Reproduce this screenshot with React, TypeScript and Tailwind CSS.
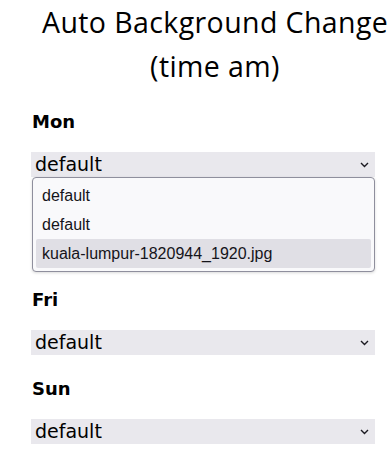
const days = [
  { label: "Mon", open: true },
  { label: "", open: false },
  { label: "Fri", open: false },
  { label: "Sun", open: false },
];

const options = ["default", "default", "kuala-lumpur-1820944_1920.jpg"];

function Chevron() {
  return (
    <svg width="9" height="6" viewBox="0 0 9 6" className="shrink-0">
      <path d="M1 1l3.5 3.5L8 1" fill="none" stroke="#1c1b22" strokeWidth="1.4" />
    </svg>
  );
}

function FakeSelect({ open }: { open: boolean }) {
  return (
    <div className="relative">
      <div className="flex h-[25px] items-center justify-between bg-[#e9e8ed] pl-[4px] pr-[6px]">
        <span className="text-[19px] leading-[25px] text-black [font-family:'DejaVu_Sans',sans-serif]">
          default
        </span>
        <Chevron />
      </div>
      {open && (
        <ul className="absolute left-[1px] right-0 top-[25px] z-10 rounded-[4px] border border-[#8f8f9d] bg-[#f9f9fb] p-[3px] shadow-[0_1px_3px_rgba(0,0,0,0.15)]">
          {options.map((opt, i) => (
            <li
              key={i}
              className={`h-[29px] rounded-[2px] pl-[6px] text-[16px] leading-[29px] text-[#15141a] [font-family:'Liberation_Sans',Arial,sans-serif] ${
                i === options.length - 1 ? "bg-[#e0dfe5]" : ""
              }`}
            >
              {opt}
            </li>
          ))}
        </ul>
      )}
    </div>
  );
}

export default function App() {
  return (
    <div className="min-h-[471px] w-[388px] overflow-hidden bg-white">
      {/* Title */}
      <h1 className="pl-[42px] text-center text-[28.5px] leading-[44px] tracking-[0.4px] font-normal text-black [font-family:'Open_Sans',sans-serif] whitespace-nowrap">
        Auto Background Change
        <br />
        (time am)
      </h1>

      {/* Day rows (second row sits under the open dropdown) */}
      <div className="mt-[23px] pl-[31px] pr-[13px]">
        {days.map((day, i) =>
          day.label ? (
            <div key={i} className="h-[89px]">
              <div className="pl-[1px] text-[18px] leading-[21px] font-bold text-black [font-family:'DejaVu_Sans',sans-serif]">
                {day.label}
              </div>
              <div className="mt-[20px]">
                <FakeSelect open={day.open} />
              </div>
            </div>
          ) : (
            <div key={i} className="h-[89px]" />
          )
        )}
      </div>
    </div>
  );
}
